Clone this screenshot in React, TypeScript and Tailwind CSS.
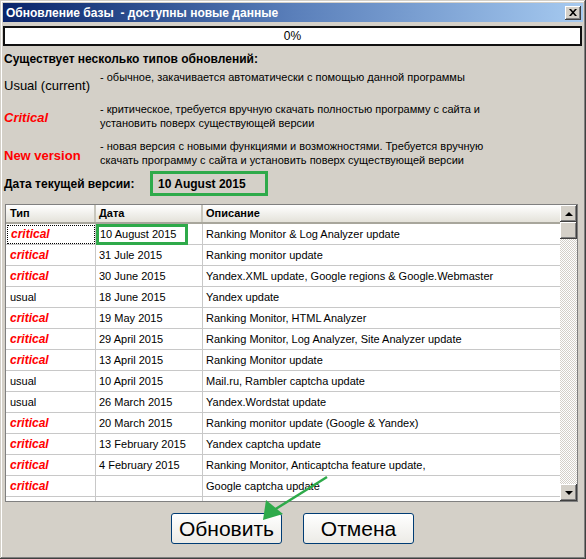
/**
 * Диалог «Обновление базы» — стиль Windows XP/классика.
 * Таблица обновлений с прокруткой, две кнопки и зелёная стрелка-подсказка.
 */

const UPDATES: { type: "critical" | "usual" | ""; date: string; desc: string }[] = [
  { type: "critical", date: "10 August 2015", desc: "Ranking Monitor & Log Analyzer update" },
  { type: "critical", date: "31 Jule 2015", desc: "Ranking monitor update" },
  { type: "critical", date: "30 June 2015", desc: "Yandex.XML update, Google regions & Google.Webmaster" },
  { type: "usual", date: "18 June 2015", desc: "Yandex update" },
  { type: "critical", date: "19 May 2015", desc: "Ranking Monitor, HTML Analyzer" },
  { type: "critical", date: "29 April 2015", desc: "Ranking Monitor, Log Analyzer, Site Analyzer update" },
  { type: "critical", date: "13 April 2015", desc: "Ranking Monitor update" },
  { type: "usual", date: "10 April 2015", desc: "Mail.ru, Rambler captcha update" },
  { type: "usual", date: "26 March 2015", desc: "Yandex.Wordstat update" },
  { type: "critical", date: "20 March 2015", desc: "Ranking monitor update (Google & Yandex)" },
  { type: "critical", date: "13 February 2015", desc: "Yandex captcha update" },
  { type: "critical", date: "4 February 2015", desc: "Ranking Monitor, Anticaptcha feature update," },
  { type: "critical", date: "", desc: "Google captcha update" },
  // частично видимая строка внизу списка
  { type: "", date: "", desc: "" },
];

function ScrollButton({ up }: { up?: boolean }) {
  return (
    <div className="w-[17px] h-[17px] bg-[#d4d0c8] flex items-center justify-center shadow-[inset_-1px_-1px_0_#404040,inset_1px_1px_0_#ffffff,inset_-2px_-2px_0_#808080]">
      <div
        className={`w-0 h-0 border-l-[4px] border-r-[4px] border-l-transparent border-r-transparent ${
          up ? "border-b-[4px] border-b-black" : "border-t-[4px] border-t-black"
        }`}
      />
    </div>
  );
}

export default function App() {
  return (
    <div className="relative w-[586px] h-[559px] bg-[#d4d0c8] p-[3px] flex flex-col overflow-hidden font-['Liberation_Sans',Arial,sans-serif] text-black shadow-[inset_-1px_-1px_0_#404040,inset_1px_1px_0_#d4d0c8,inset_-2px_-2px_0_#808080,inset_2px_2px_0_#ffffff]">
      {/* заголовок окна */}
      <div className="h-[19px] shrink-0 flex items-center justify-between pl-[3px] pr-[2px] bg-gradient-to-r from-[#0a246a] via-[#5a7fba] to-[#a6caf0]">
        <span className="text-white font-bold text-[12px] leading-none whitespace-pre">
          Обновление базы  - доступны новые данные
        </span>
        <div className="w-[16px] h-[14px] bg-[#d4d0c8] flex items-center justify-center shadow-[inset_-1px_-1px_0_#404040,inset_1px_1px_0_#ffffff,inset_-2px_-2px_0_#808080]">
          <svg width="8" height="7" viewBox="0 0 8 7">
            <path d="M0 0h2l2 2.2L6 0h2L5 3.5 8 7H6L4 4.8 2 7H0l3-3.5z" fill="#000" />
          </svg>
        </div>
      </div>

      {/* прогресс */}
      <div className="mt-[4px] mr-[1px] h-[20px] shrink-0 bg-white border-2 border-[#111] flex items-center justify-center text-[12px]">
        0%
      </div>

      <div className="pl-[1px]">
        <div className="mt-[6px] text-[12px] font-bold leading-[15px]">
          Существует несколько типов обновлений:
        </div>

        <div className="mt-[3px] flex">
          <div className="w-[96px] shrink-0 mt-[8px] text-[13px] leading-[16px]">Usual (current)</div>
          <div className="text-[11px] leading-[14px]">
            - обычное, закачивается автоматически с помощью данной программы
          </div>
        </div>

        <div className="mt-[8px] flex">
          <div className="w-[96px] shrink-0 mt-[8px] text-[13px] leading-[16px] font-bold italic text-[#ff0000]">
            Critical
          </div>
          <div className="text-[11px] leading-[14px]">
            - критическое, требуется вручную скачать полностью программу с сайта и
            <br />
            установить поверх существующей версии
          </div>
        </div>

        <div className="mt-[9px] flex">
          <div className="w-[96px] shrink-0 mt-[9px] text-[13px] leading-[16px] font-bold text-[#ff0000]">
            New version
          </div>
          <div className="text-[11px] leading-[14px]">
            - новая версия с новыми функциями и возможностями. Требуется вручную
            <br />
            скачать программу с сайта и установить поверх существующей версии
          </div>
        </div>

        <div className="mt-[4px] flex items-center">
          <div className="w-[146px] shrink-0 text-[12px] font-bold">Дата текущей версии:</div>
          <div className="w-[118px] h-[25px] border-[3px] border-[#2eaa4a] flex items-center pl-[5px] text-[12px] font-bold">
            10 August 2015
          </div>
        </div>
      </div>

      {/* таблица обновлений */}
      <div className="mt-[8px] ml-[2px] w-[573px] h-[298px] shrink-0 flex border border-[#808080] bg-white">
        <div className="flex-1 overflow-hidden text-[11px]">
          <div className="h-[19px] flex font-bold bg-gradient-to-b from-white to-[#e4e2da] border-b-2 border-[#a8a69c]">
            <div className="w-[90px] shrink-0 pl-[4px] flex items-center border-r-2 border-[#c8c6bc]">Тип</div>
            <div className="w-[107px] shrink-0 pl-[3px] flex items-center border-r-2 border-[#c8c6bc]">Дата</div>
            <div className="flex-1 pl-[3px] flex items-center">Описание</div>
          </div>
          {UPDATES.map((u, i) => (
            <div key={i} className="h-[21px] flex border-b border-[#c8c8c8]">
              <div className="w-[90px] shrink-0 flex items-center pl-[1px] border-r border-[#c8c8c8]">
                <span
                  className={`h-[19px] flex items-center pl-[3px] w-[88px] ${
                    i === 0 ? "border border-dotted border-black" : ""
                  } ${
                    u.type === "critical"
                      ? "text-[#ff0000] font-bold italic text-[12px]"
                      : "text-[11px]"
                  }`}
                >
                  {u.type}
                </span>
              </div>
              <div className="w-[107px] shrink-0 flex items-center border-r border-[#c8c8c8]">
                {i === 0 ? (
                  <span className="h-[21px] w-[92px] border-[3px] border-[#2eaa4a] flex items-center pl-[1px]">
                    {u.date}
                  </span>
                ) : (
                  <span className="pl-[3px]">{u.date}</span>
                )}
              </div>
              <div className="flex-1 flex items-center pl-[3px] whitespace-nowrap">{u.desc}</div>
            </div>
          ))}
        </div>
        <div className="w-[17px] shrink-0 flex flex-col bg-[repeating-conic-gradient(#d4d0c8_0%_25%,#ffffff_0%_50%)] bg-[length:2px_2px]">
          <ScrollButton up />
          <div className="h-[17px] bg-[#d4d0c8] shadow-[inset_-1px_-1px_0_#404040,inset_1px_1px_0_#ffffff,inset_-2px_-2px_0_#808080]" />
          <div className="flex-1" />
          <ScrollButton />
        </div>
      </div>

      {/* кнопки */}
      <div className="mt-[11px] flex justify-center gap-[21px] pr-[1px]">
        <button className="w-[111px] h-[31px] rounded-[3px] border border-[#003c74] bg-gradient-to-b from-white to-[#ecebe6] text-[21px] leading-none">
          Обновить
        </button>
        <button className="w-[111px] h-[31px] rounded-[3px] border border-[#003c74] bg-gradient-to-b from-white to-[#ecebe6] text-[21px] leading-none">
          Отмена
        </button>
      </div>

      {/* зелёная стрелка */}
      <svg
        className="absolute left-0 top-0 pointer-events-none"
        width="586"
        height="559"
        viewBox="0 0 586 559"
      >
        <line x1="327" y1="477" x2="274" y2="510" stroke="#2eaa4a" strokeWidth="2.5" />
        <polygon points="263,520 266,500 283,514" fill="#2eaa4a" />
      </svg>
    </div>
  );
}
